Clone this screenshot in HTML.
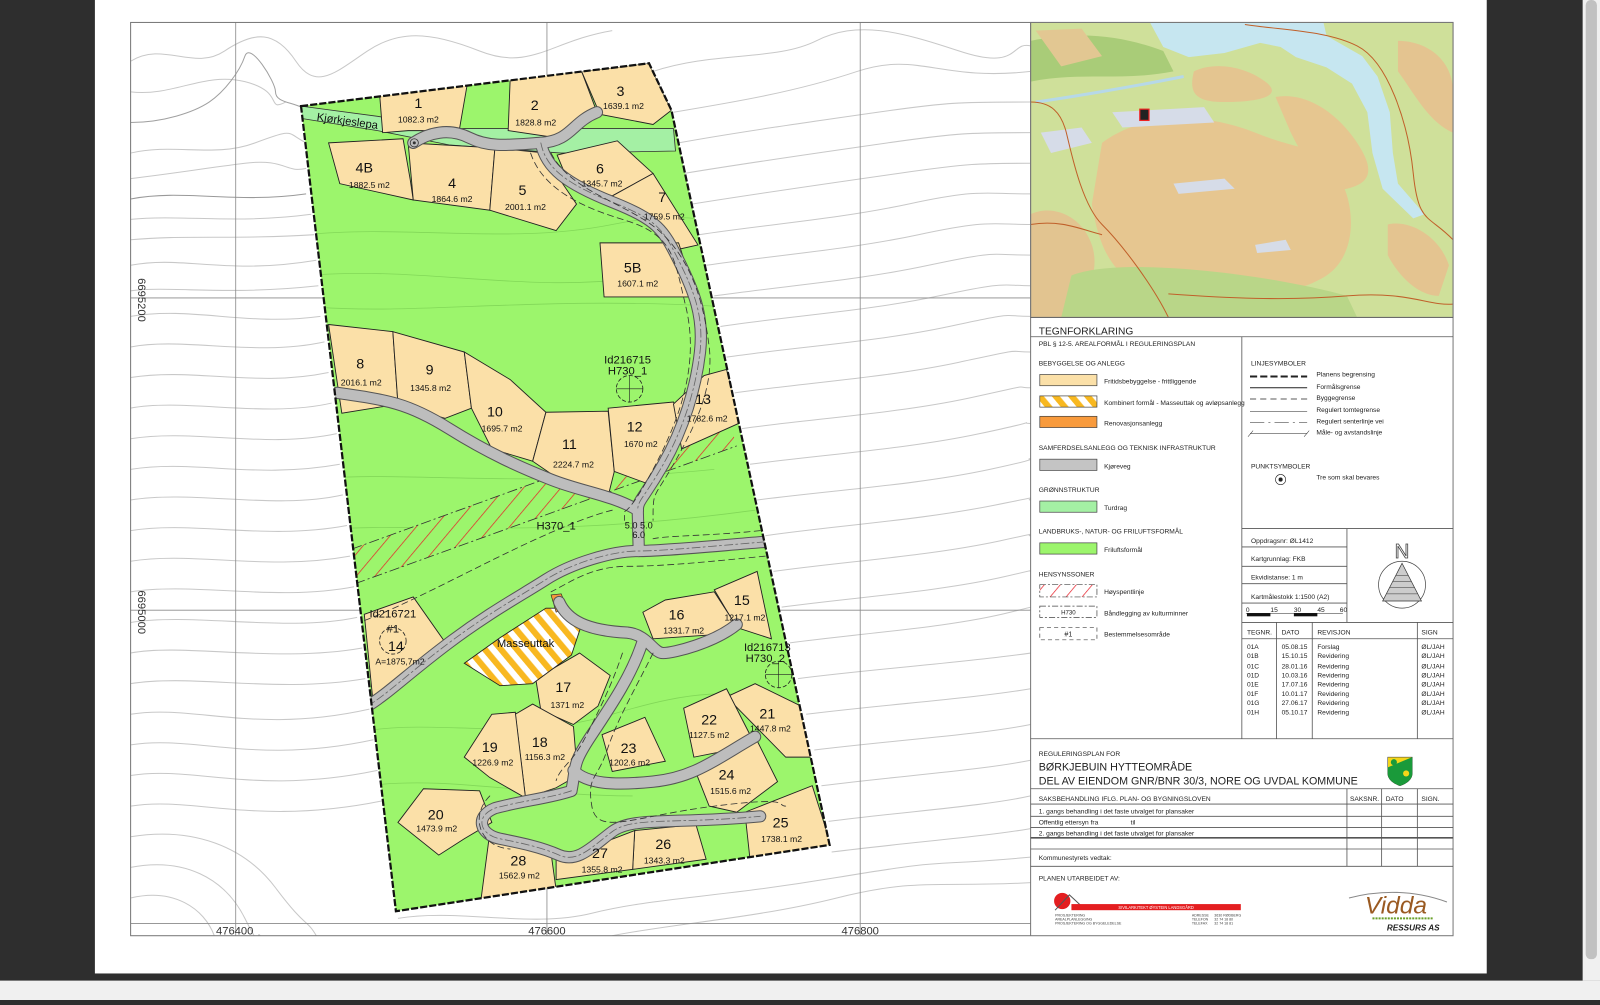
<!DOCTYPE html>
<html><head><meta charset="utf-8">
<style>
html,body{margin:0;padding:0;width:1600px;height:1000px;overflow:hidden;background:#2e2e2e;}
#w{position:absolute;left:0;top:0;width:1568px;height:980px;transform:scale(1.020408);transform-origin:0 0;}
svg text{font-family:"Liberation Sans",sans-serif;}
</style></head><body>
<div id="w">
<svg width="1568" height="980" viewBox="0 0 1568 980" xmlns="http://www.w3.org/2000/svg">
<defs>
<pattern id="red" width="14" height="14" patternUnits="userSpaceOnUse" patternTransform="rotate(40)">
<rect width="14" height="14" fill="#9cf56c"/><line x1="0" y1="0" x2="0" y2="14" stroke="#e8202a" stroke-width="1.4"/></pattern>
<pattern id="ylw" width="12" height="12" patternUnits="userSpaceOnUse" patternTransform="rotate(-40)">
<rect width="12" height="12" fill="#fff"/><rect width="6" height="12" fill="#f8b820"/></pattern>
<pattern id="ylw2" width="12" height="12" patternUnits="userSpaceOnUse" patternTransform="rotate(-40)">
<rect width="12" height="12" fill="#fff"/><rect width="6" height="12" fill="#f8b820"/></pattern>
<pattern id="redl" width="12" height="12" patternUnits="userSpaceOnUse" patternTransform="rotate(40)">
<rect width="12" height="12" fill="#fff"/><line x1="0" y1="0" x2="0" y2="12" stroke="#e8202a" stroke-width="1.4"/></pattern>
<clipPath id="mapclip"><rect x="128" y="22" width="882" height="895"/></clipPath>
<clipPath id="plan"><polygon points="295,104 636,62 658,108 813,828 388,893"/></clipPath>
<clipPath id="topo"><rect x="1010" y="22" width="414" height="289"/></clipPath>
</defs>
<!-- page -->
<rect x="93" y="0" width="1364" height="954" fill="#fff"/>
<rect x="0" y="961" width="1568" height="19" fill="#f0f0f0"/>
<rect x="1551" y="0" width="17" height="961" fill="#f0f0f0"/>
<rect x="1554" y="0" width="11" height="940" rx="5" fill="#c1c1c1"/>

<!-- map area -->
<g clip-path="url(#mapclip)" fill="none" stroke="#c8c8c8" stroke-width="1">
<path d="M128,60 C160,40 190,70 220,50 S270,30 290,60 S330,70 360,50 S420,30 470,50 S540,40 600,30"/>
<path d="M128,90 C170,95 200,70 240,80 S260,110 280,100"/>
<path d="M128,120 C160,120 190,110 205,100 S235,70 240,55 S270,80 270,90 S285,100 295,105" stroke="#a0a0a0"/>
<path d="M128,150 C170,140 210,155 250,140 S280,130 300,140"/>
<path d="M128,175 C170,170 200,165 240,160 S280,170 300,165"/>
<path d="M128,195 C180,185 230,200 300,190" stroke="#999"/>
<path d="M128,215 C180,210 230,220 305,210"/>
<path d="M128,235 C180,230 230,235 308,230"/>
<path d="M128,260 C180,250 220,270 310,255"/>
<path d="M128,285 C170,280 220,290 312,280"/>
<path d="M128,310 C190,300 240,320 314,310"/>
<path d="M128,340 C180,330 250,350 318,335"/>
<path d="M128,370 C190,360 250,380 322,365"/>
<path d="M128,400 C180,390 260,410 325,395"/>
<path d="M128,430 C190,420 260,440 330,425"/>
<path d="M128,460 C190,450 250,470 333,455"/>
<path d="M128,490 C190,480 270,500 336,485"/>
<path d="M128,520 C190,510 260,530 340,515"/>
<path d="M128,550 C190,540 260,560 343,545"/>
<path d="M128,580 C190,570 270,590 347,575"/>
<path d="M128,610 C190,600 280,620 350,605"/>
<path d="M128,640 C180,630 270,650 355,635"/>
<path d="M128,670 C190,660 270,680 358,665"/>
<path d="M128,700 C190,690 250,720 362,695"/>
<path d="M128,730 C190,720 250,750 366,725"/>
<path d="M128,760 C190,750 250,780 370,755"/>
<path d="M128,790 C190,780 250,810 374,785"/>
<path d="M128,820 C190,810 240,830 270,870 S300,900 310,917"/>
<path d="M128,850 C180,840 220,860 240,900 S250,910 255,917"/>
<path d="M128,880 C170,870 200,890 210,917"/>
<path d="M390,900 C450,890 520,910 580,895 S700,880 820,860 S900,850 1010,840"/>
<path d="M600,917 C660,905 740,900 820,880 S920,870 1010,865"/>
<path d="M640,70 C700,50 760,60 800,40 S880,30 940,50 S990,40 1010,45"/>
<path d="M660,110 C720,100 780,90 840,70 S920,80 1010,70"/>
<path d="M665,140 C720,130 790,120 860,110 S940,100 1010,100"/>
<path d="M670,170 C730,160 800,150 870,140 S950,130 1010,130"/>
<path d="M678,200 C740,190 810,180 880,170 S960,160 1010,160"/>
<path d="M685,230 C750,220 820,215 890,200 S960,190 1010,190"/>
<path d="M692,260 C760,250 830,245 900,230 S970,220 1010,220"/>
<path d="M700,290 C770,280 840,275 910,260 S970,250 1010,250"/>
<path d="M706,320 C770,310 850,305 920,290 S980,280 1010,280"/>
<path d="M712,350 C780,340 860,335 930,320 S980,310 1010,310"/>
<path d="M720,385 C790,375 870,370 940,355 S985,345 1010,345"/>
<path d="M727,420 C800,410 880,405 950,390 S990,380 1010,380"/>
<path d="M735,455 C810,445 890,440 960,425 S995,415 1010,415"/>
<path d="M742,490 C820,480 900,475 970,460 S1000,450 1010,450"/>
<path d="M750,525 C820,515 900,510 975,495 S1000,490 1010,490"/>
<path d="M758,560 C830,550 910,545 980,530 S1000,525 1010,525"/>
<path d="M766,595 C840,585 920,580 985,565 S1005,560 1010,560"/>
<path d="M774,630 C850,620 930,615 990,600 S1005,598 1010,598"/>
<path d="M782,665 C860,655 940,650 1010,640"/>
<path d="M790,700 C870,690 950,685 1010,675"/>
<path d="M798,735 C880,725 960,720 1010,710"/>
<path d="M805,770 C885,760 960,755 1010,745"/>
<path d="M812,805 C890,795 965,790 1010,780"/>
<path d="M815,835 C895,825 965,820 1010,812"/>
</g>
<!-- grid -->
<g stroke="#8a8a8a" stroke-width="0.8">
<line x1="231" y1="22" x2="231" y2="917"/><line x1="536" y1="22" x2="536" y2="917"/><line x1="843" y1="22" x2="843" y2="917"/>
<line x1="128" y1="292" x2="1010" y2="292"/><line x1="128" y1="598" x2="1010" y2="598"/>
<line x1="128" y1="905" x2="1010" y2="905"/>
</g>

<!-- plan -->
<polygon points="295,104 636,62 658,108 813,828 388,893" fill="#9cf56c"/>
<g clip-path="url(#plan)">
<g fill="none" stroke="#82d858" stroke-width="0.8">
<path d="M300,230 C400,220 500,240 600,220 S700,230 760,220"/>
<path d="M300,270 C420,260 520,290 640,270"/>
<path d="M300,300 C400,310 520,290 700,300"/>
<path d="M300,470 C400,460 500,480 700,460"/>
<path d="M300,520 C420,510 520,530 740,500"/>
<path d="M340,720 C420,700 500,730 600,700 S720,680 800,690"/>
<path d="M360,770 C440,760 520,780 620,780"/>
</g>
<!-- turdrag -->
<polygon points="295,104 370,114 440,126 660,126 662,148 550,150 440,142 370,128 295,116" fill="#a4f0a4" stroke="#333" stroke-width="0.8"/>
<!-- hoyspent -->
<polygon points="345,538 712,405 722,437 348,572" fill="url(#red)"/>
<path d="M345,538 L712,405 M348,572 L722,437" stroke="#333" stroke-width="0.8" stroke-dasharray="10,3,2,3" fill="none"/>
<!-- lots -->
<g fill="#fbe0a8" stroke="#222" stroke-width="0.9">
<polygon points="372,92 458,82 450,128 400,128 375,130"/>
<polygon points="500,77 570,70 585,110 545,135 498,128"/>
<polygon points="570,70 636,62 658,108 640,122 588,112"/>
<polygon points="322,140 395,136 402,176 405,196 333,180"/>
<polygon points="400,140 485,145 480,206 405,196"/>
<polygon points="485,145 535,150 548,175 565,200 545,226 480,206"/>
<polygon points="546,152 605,138 640,170 600,192 556,176"/>
<polygon points="600,192 640,170 684,240 662,245 636,216"/>
<polygon points="588,238 665,238 682,291 592,291"/>
<polygon points="322,318 385,325 390,396 335,405"/>
<polygon points="385,325 455,345 462,400 436,410 390,396"/>
<polygon points="455,345 500,372 535,404 522,452 482,440 462,400"/>
<polygon points="535,404 596,403 602,462 597,482 560,478 522,452"/>
<polygon points="596,400 660,394 672,420 656,450 640,476 602,462"/>
<polygon points="660,396 690,368 712,362 726,414 668,440"/>
<polygon points="357,602 405,585 438,632 415,650 366,692"/>
<polygon points="700,578 742,560 756,626 722,615"/>
<polygon points="630,600 652,588 700,580 722,614 700,622 640,626"/>
<polygon points="525,665 568,640 598,662 586,692 562,710 530,696"/>
<polygon points="505,700 522,690 562,712 566,760 545,772 515,782"/>
<polygon points="455,742 482,700 505,698 515,782 480,762"/>
<polygon points="390,806 415,773 470,775 482,806 455,822 430,838"/>
<polygon points="712,683 740,670 785,692 798,742 770,742"/>
<polygon points="670,694 712,675 736,722 710,736 680,742"/>
<polygon points="590,720 632,703 652,746 600,756"/>
<polygon points="680,752 740,722 762,766 722,796 695,790"/>
<polygon points="730,796 796,770 815,830 735,842"/>
<polygon points="622,814 682,808 692,842 620,852"/>
<polygon points="545,842 575,832 622,814 620,852 545,862"/>
<polygon points="480,816 540,836 545,872 470,892"/>
</g>
<!-- masseuttak -->
<polygon points="455,650 490,625 535,596 550,596 570,612 560,642 522,670 490,672" fill="url(#ylw)" stroke="#222" stroke-width="0.9"/>
<polygon points="540,583 550,582 555,595 545,600" fill="#f8963c" stroke="#222" stroke-width="0.6"/>
<!-- roads -->
<g fill="none" stroke-linecap="round" stroke-linejoin="round">
<g stroke="#555" stroke-width="12">
<path d="M405,140 C420,130 440,125 460,135 S500,142 530,140 S560,120 585,110"/>
<path d="M530,140 C535,165 555,180 600,198 S650,225 665,255 S690,310 686,345 S670,420 650,455 S625,490 625,500"/>
<path d="M625,500 C600,485 570,482 540,470 S480,445 440,420 S380,392 330,385"/>
<path d="M625,500 L626,540"/>
<path d="M750,531 C700,535 650,540 625,540 S560,552 535,568 S480,600 440,630 S380,680 360,692"/>
<path d="M548,590 C556,608 575,618 615,620 C635,622 640,640 650,640 S700,630 722,612"/>
<path d="M630,628 C620,660 600,690 580,720 S565,750 560,775"/>
<path d="M560,775 C540,782 510,785 485,792 C465,800 470,818 490,822 S530,830 548,838 S580,830 600,815 S660,808 745,800"/>
<path d="M562,755 C575,768 600,770 640,766 S700,745 740,722"/>
</g>
<g stroke="#bdbdbd" stroke-width="10">
<path d="M405,140 C420,130 440,125 460,135 S500,142 530,140 S560,120 585,110"/>
<path d="M530,140 C535,165 555,180 600,198 S650,225 665,255 S690,310 686,345 S670,420 650,455 S625,490 625,500"/>
<path d="M625,500 C600,485 570,482 540,470 S480,445 440,420 S380,392 330,385"/>
<path d="M625,500 L626,540"/>
<path d="M750,531 C700,535 650,540 625,540 S560,552 535,568 S480,600 440,630 S380,680 360,692"/>
<path d="M548,590 C556,608 575,618 615,620 C635,622 640,640 650,640 S700,630 722,612"/>
<path d="M630,628 C620,660 600,690 580,720 S565,750 560,775"/>
<path d="M560,775 C540,782 510,785 485,792 C465,800 470,818 490,822 S530,830 548,838 S580,830 600,815 S660,808 745,800"/>
<path d="M562,755 C575,768 600,770 640,766 S700,745 740,722"/>
</g>
<g stroke="#666" stroke-width="0.8" stroke-dasharray="8,3,2,3">
<path d="M530,140 C535,165 555,180 600,198 S650,225 665,255 S690,310 686,345 S670,420 650,455 S625,490 625,500"/>
<path d="M750,531 C700,535 650,540 625,540 S560,552 535,568 S480,600 440,630 S380,680 360,692"/>
<path d="M560,775 C540,782 510,785 485,792 C465,800 470,818 490,822 S530,830 548,838 S580,830 600,815 S660,808 745,800"/>
</g>
<g stroke="#333" stroke-width="0.8" stroke-dasharray="6,4">
<path d="M540,150 C560,190 620,200 650,230 S690,300 695,340 S680,420 660,455 S640,480 640,510"/>
<path d="M520,150 C530,180 560,200 610,215 S660,250 672,300 S672,400 640,460 S612,490 612,510"/>
<path d="M750,545 C700,550 650,555 615,555 S560,570 540,580"/>
<path d="M600,500 C560,510 500,540 460,560 S380,600 352,610"/>
<path d="M745,520 C700,525 650,525 640,528"/>
<path d="M640,640 C620,680 605,705 595,735 S575,760 580,790 S620,800 700,790 S760,790 770,790"/>
<path d="M610,640 C600,670 590,690 575,720 S550,750 545,765"/>
<path d="M480,780 C460,800 470,830 500,832"/>
</g>
</g>
<!-- tree symbol -->
<circle cx="406" cy="140" r="4" fill="none" stroke="#333" stroke-width="0.8"/><circle cx="406" cy="140" r="1.5" fill="#333"/>
<!-- hensyn circles -->
<circle cx="617" cy="381" r="13" fill="none" stroke="#222" stroke-width="0.8" stroke-dasharray="4,2"/>
<line x1="604" y1="381" x2="630" y2="381" stroke="#222" stroke-width="0.6"/><line x1="617" y1="368" x2="617" y2="394" stroke="#222" stroke-width="0.6"/>
<circle cx="763" cy="661" r="13" fill="none" stroke="#222" stroke-width="0.8" stroke-dasharray="4,2"/>
<line x1="750" y1="661" x2="776" y2="661" stroke="#222" stroke-width="0.6"/><line x1="763" y1="648" x2="763" y2="674" stroke="#222" stroke-width="0.6"/>
<circle cx="385" cy="628" r="13" fill="none" stroke="#222" stroke-width="0.8" stroke-dasharray="4,2"/>
</g>
<polygon points="295,104 636,62 658,108 813,828 388,893" fill="none" stroke="#111" stroke-width="2.2" stroke-dasharray="7,2"/>

<!-- labels -->
<g font-size="14" fill="#111" text-anchor="middle">
<text x="410" y="106">1</text><text x="524" y="108">2</text><text x="608" y="94">3</text>
<text x="357" y="169">4B</text><text x="443" y="184">4</text><text x="512" y="191">5</text>
<text x="588" y="170">6</text><text x="649" y="198">7</text><text x="620" y="267">5B</text>
<text x="353" y="361">8</text><text x="421" y="367">9</text><text x="485" y="408">10</text>
<text x="558" y="440">11</text><text x="622" y="423">12</text><text x="689" y="396">13</text>
<text x="388" y="638">14</text><text x="727" y="593">15</text><text x="663" y="607">16</text>
<text x="552" y="678">17</text><text x="529" y="732">18</text><text x="480" y="737">19</text>
<text x="427" y="803">20</text><text x="752" y="704">21</text><text x="695" y="710">22</text>
<text x="616" y="738">23</text><text x="712" y="764">24</text><text x="765" y="811">25</text>
<text x="650" y="832">26</text><text x="588" y="841">27</text><text x="508" y="848">28</text>
</g>
<g font-size="8.5" fill="#111" text-anchor="middle">
<text x="410" y="120">1082.3 m2</text><text x="525" y="123">1828.8 m2</text><text x="611" y="107">1639.1 m2</text>
<text x="362" y="184">1882.5 m2</text><text x="443" y="198">1864.6 m2</text><text x="515" y="206">2001.1 m2</text>
<text x="590" y="183">1345.7 m2</text><text x="651" y="215">1759.5 m2</text><text x="625" y="281">1607.1 m2</text>
<text x="354" y="378">2016.1 m2</text><text x="422" y="383">1345.8 m2</text><text x="492" y="423">1695.7 m2</text>
<text x="562" y="458">2224.7 m2</text><text x="628" y="438">1670 m2</text><text x="693" y="413">1782.6 m2</text>
<text x="392" y="651">A=1875,7m2</text><text x="730" y="608">1217.1 m2</text><text x="670" y="621">1331.7 m2</text>
<text x="556" y="694">1371 m2</text><text x="534" y="745">1156.3 m2</text><text x="483" y="750">1226.9 m2</text>
<text x="428" y="815">1473.9 m2</text><text x="755" y="717">1447.8 m2</text><text x="695" y="723">1127.5 m2</text>
<text x="617" y="750">1202.6 m2</text><text x="716" y="778">1515.6 m2</text><text x="766" y="825">1738.1 m2</text>
<text x="651" y="846">1343.3 m2</text><text x="590" y="855">1355.8 m2</text><text x="509" y="861">1562.9 m2</text>
</g>
<g font-size="11" fill="#111" text-anchor="middle">
<text x="615" y="356">Id216715</text><text x="615" y="367">H730_1</text>
<text x="752" y="638">Id216713</text><text x="750" y="649">H730_2</text>
<text x="385" y="605">Id216721</text><text x="385" y="620">#1</text>
<text x="545" y="519">H370_1</text>
<text x="515" y="634">Masseuttak</text>
<text x="626" y="518" font-size="9">5.0 5.0</text><text x="626" y="527" font-size="9">6.0</text>
</g>
<text x="310" y="118" font-size="11" fill="#111" transform="rotate(8 310 118)">Kjørkjeslepa</text>
<!-- coordinate labels -->
<g font-size="11" fill="#333" text-anchor="middle">
<text x="230" y="916">476400</text><text x="536" y="916">476600</text><text x="843" y="916">476800</text>
<text transform="translate(135,294) rotate(90)">6695200</text>
<text transform="translate(135,600) rotate(90)">6695000</text>
</g>

<!-- topo map -->
<g clip-path="url(#topo)">
<rect x="1010" y="22" width="414" height="289" fill="#cfe09a"/>
<path d="M1010,40 C1060,30 1100,35 1140,50 L1150,70 C1100,80 1060,70 1010,80 Z" fill="#a9cc78"/>
<path d="M1015,30 L1060,28 L1080,55 L1040,65 Z" fill="#e2c792"/>
<path d="M1080,140 C1120,110 1180,110 1230,130 S1290,140 1310,170 S1330,250 1300,270 S1200,300 1150,290 S1080,260 1070,200 Z" fill="#e6c690"/>
<path d="M1250,95 C1280,90 1310,110 1330,140 S1340,180 1320,185 S1280,160 1265,130 Z" fill="#e6c690"/>
<path d="M1010,210 C1030,200 1060,210 1070,240 S1060,300 1040,311 L1010,311 Z" fill="#e2c490"/>
<path d="M1170,70 C1190,60 1220,65 1240,80 S1230,100 1200,100 S1165,90 1170,70 Z" fill="#e4c590"/>
<path d="M1370,40 C1400,40 1424,60 1424,90 L1424,130 C1400,120 1385,90 1370,70 Z" fill="#e4c490"/>
<path d="M1360,220 C1380,215 1410,230 1420,260 L1410,290 C1390,290 1370,270 1360,250 Z" fill="#e4c490"/>
<path d="M1050,270 C1100,250 1250,270 1320,290 L1330,311 L1040,311 Z" fill="#b9d688"/>
<path d="M1090,110 L1180,105 L1190,120 L1100,125 Z" fill="#d6dce8"/>
<path d="M1150,180 L1200,175 L1210,185 L1155,190 Z" fill="#d6dce8"/>
<path d="M1230,240 L1260,235 L1265,245 L1232,248 Z" fill="#d6dce8"/>
<path d="M1020,130 L1060,125 L1070,140 L1030,150 Z" fill="#d6dce8"/>
<path d="M1127,22 L1297,22 L1300,35 L1335,55 L1350,75 L1362,110 L1365,150 L1370,180 L1396,210 L1385,214 L1355,185 L1345,150 L1340,110 L1325,82 L1300,66 L1270,56 L1255,46 L1235,42 L1200,52 L1165,56 L1140,46 Z" fill="#c6e6f0"/>
<path d="M1015,100 C1050,95 1110,85 1160,75" stroke="#b6d8e8" stroke-width="3" fill="none"/>
<g fill="none" stroke="#c0602a" stroke-width="1">
<path d="M1010,100 C1030,100 1040,110 1045,130 S1060,200 1080,220 S1130,280 1145,311"/>
<path d="M1145,288 C1200,292 1260,295 1320,290 S1400,300 1424,298"/>
<path d="M1220,24 C1260,30 1300,30 1330,45 S1380,120 1385,170 S1400,210 1424,235"/>
<path d="M1010,220 C1040,215 1060,225 1080,230"/>
</g>
<rect x="1117" y="107" width="9" height="11" fill="#222" stroke="#e22" stroke-width="1.2"/>
</g>
<rect x="1010" y="22" width="414" height="289" fill="none" stroke="#888" stroke-width="1"/>

<!-- frame -->
<rect x="128" y="22" width="1296" height="895" fill="none" stroke="#777" stroke-width="1"/>
<line x1="1010" y1="22" x2="1010" y2="917" stroke="#777" stroke-width="1"/>

<!-- legend -->
<g stroke="#555" stroke-width="0.8" fill="none">
<line x1="1010" y1="311" x2="1424" y2="311"/>
<line x1="1010" y1="330" x2="1424" y2="330"/>
<line x1="1217" y1="330" x2="1217" y2="724"/>
<line x1="1217" y1="518" x2="1424" y2="518"/>
<line x1="1320" y1="518" x2="1320" y2="610"/>
<line x1="1217" y1="536" x2="1320" y2="536"/><line x1="1217" y1="555" x2="1320" y2="555"/>
<line x1="1217" y1="572" x2="1320" y2="572"/><line x1="1217" y1="591" x2="1320" y2="591"/>
<line x1="1217" y1="610" x2="1424" y2="610"/><line x1="1217" y1="626" x2="1424" y2="626"/>
<line x1="1251" y1="610" x2="1251" y2="724"/><line x1="1286" y1="610" x2="1286" y2="724"/><line x1="1389" y1="610" x2="1389" y2="724"/>
<line x1="1010" y1="724" x2="1424" y2="724"/>
<line x1="1010" y1="773" x2="1424" y2="773"/>
<line x1="1010" y1="788" x2="1424" y2="788"/><line x1="1010" y1="800" x2="1424" y2="800"/>
<line x1="1010" y1="811" x2="1424" y2="811"/>
<line x1="1010" y1="821" x2="1424" y2="821" stroke-width="1.6"/>
<line x1="1010" y1="832" x2="1424" y2="832"/><line x1="1010" y1="849" x2="1424" y2="849"/>
<line x1="1320" y1="773" x2="1320" y2="849"/><line x1="1354" y1="773" x2="1354" y2="849"/><line x1="1389" y1="773" x2="1389" y2="849"/>
</g>
<g font-size="6.5" fill="#222">
<text x="1018" y="328" font-size="10">TEGNFORKLARING</text>
<text x="1018" y="339">PBL § 12-5. AREALFORMÅL I REGULERINGSPLAN</text>
<text x="1018" y="358">BEBYGGELSE OG ANLEGG</text>
<text x="1082" y="376">Fritidsbebyggelse - frittliggende</text>
<text x="1082" y="397">Kombinert formål - Masseuttak og avløpsanlegg</text>
<text x="1082" y="417">Renovasjonsanlegg</text>
<text x="1018" y="441">SAMFERDSELSANLEGG OG TEKNISK INFRASTRUKTUR</text>
<text x="1082" y="459">Kjøreveg</text>
<text x="1018" y="482">GRØNNSTRUKTUR</text>
<text x="1082" y="500">Turdrag</text>
<text x="1018" y="523">LANDBRUKS-, NATUR- OG FRILUFTSFORMÅL</text>
<text x="1082" y="541">Friluftsformål</text>
<text x="1018" y="565">HENSYNSSONER</text>
<text x="1082" y="582">Høyspentlinje</text>
<text x="1082" y="603">Båndlegging av kulturminner</text>
<text x="1082" y="624">Bestemmelsesområde</text>
<text x="1226" y="358">LINJESYMBOLER</text>
<text x="1290" y="369">Planens begrensing</text>
<text x="1290" y="381">Formålsgrense</text>
<text x="1290" y="392">Byggegrense</text>
<text x="1290" y="404">Regulert tomtegrense</text>
<text x="1290" y="415">Regulert senterlinje vei</text>
<text x="1290" y="426">Måle- og avstandslinje</text>
<text x="1226" y="459">PUNKTSYMBOLER</text>
<text x="1290" y="470">Tre som skal bevares</text>
<text x="1226" y="532">Oppdragsnr: ØL1412</text>
<text x="1226" y="550">Kartgrunnlag: FKB</text>
<text x="1226" y="568">Ekvidistanse: 1 m</text>
<text x="1226" y="587">Kartmålestokk 1:1500 (A2)</text>
<text x="1221" y="600">0</text><text x="1245" y="600">15</text><text x="1268" y="600">30</text><text x="1291" y="600">45</text><text x="1313" y="600">60</text>
<text x="1222" y="622">TEGNR.</text><text x="1256" y="622">DATO</text><text x="1291" y="622">REVISJON</text><text x="1393" y="622">SIGN</text>
</g>
<g font-size="6.5" fill="#222">
<text x="1222" y="636">01A</text><text x="1256" y="636">05.08.15</text><text x="1291" y="636">Forslag</text><text x="1393" y="636">ØL/JAH</text>
<text x="1222" y="645">01B</text><text x="1256" y="645">15.10.15</text><text x="1291" y="645">Revidering</text><text x="1393" y="645">ØL/JAH</text>
<text x="1222" y="655">01C</text><text x="1256" y="655">28.01.16</text><text x="1291" y="655">Revidering</text><text x="1393" y="655">ØL/JAH</text>
<text x="1222" y="664">01D</text><text x="1256" y="664">10.03.16</text><text x="1291" y="664">Revidering</text><text x="1393" y="664">ØL/JAH</text>
<text x="1222" y="673">01E</text><text x="1256" y="673">17.07.16</text><text x="1291" y="673">Revidering</text><text x="1393" y="673">ØL/JAH</text>
<text x="1222" y="682">01F</text><text x="1256" y="682">10.01.17</text><text x="1291" y="682">Revidering</text><text x="1393" y="682">ØL/JAH</text>
<text x="1222" y="691">01G</text><text x="1256" y="691">27.06.17</text><text x="1291" y="691">Revidering</text><text x="1393" y="691">ØL/JAH</text>
<text x="1222" y="700">01H</text><text x="1256" y="700">05.10.17</text><text x="1291" y="700">Revidering</text><text x="1393" y="700">ØL/JAH</text>
<text x="1018" y="741">REGULERINGSPLAN FOR</text>
<text x="1018" y="755" font-size="10.5">BØRKJEBUIN HYTTEOMRÅDE</text>
<text x="1018" y="769" font-size="10.5">DEL AV EIENDOM GNR/BNR 30/3, NORE OG UVDAL KOMMUNE</text>
<text x="1018" y="785">SAKSBEHANDLING IFLG. PLAN- OG BYGNINGSLOVEN</text>
<text x="1323" y="785">SAKSNR.</text><text x="1358" y="785">DATO</text><text x="1393" y="785">SIGN.</text>
<text x="1018" y="797">1. gangs behandling i det faste utvalget for plansaker</text>
<text x="1018" y="808">Offentlig ettersyn fra</text><text x="1108" y="808">til</text>
<text x="1018" y="819">2. gangs behandling i det faste utvalget for plansaker</text>
<text x="1018" y="843">Kommunestyrets vedtak:</text>
<text x="1018" y="863">PLANEN UTARBEIDET AV:</text>
</g>
<!-- swatches -->
<g stroke="#444" stroke-width="0.7">
<rect x="1019" y="367" width="56" height="11" fill="#fbe0a8"/>
<rect x="1019" y="388" width="56" height="11" fill="url(#ylw2)"/>
<rect x="1019" y="408" width="56" height="11" fill="#f89a3c"/>
<rect x="1019" y="450" width="56" height="11" fill="#c4c4c4"/>
<rect x="1019" y="491" width="56" height="11" fill="#a4f0a4"/>
<rect x="1019" y="532" width="56" height="11" fill="#9cf56c"/>
<rect x="1019" y="573" width="56" height="12" fill="url(#redl)" stroke-dasharray="6,2,2,2"/>
<rect x="1019" y="594" width="56" height="11" fill="none" stroke-dasharray="6,2,2,2"/>
<rect x="1019" y="615" width="56" height="12" fill="none" stroke-dasharray="4,3"/>
</g>
<text x="1047" y="602" font-size="6" fill="#222" text-anchor="middle">H730</text>
<text x="1047" y="624" font-size="7" fill="#222" text-anchor="middle">#1</text>
<g stroke="#222" fill="none">
<line x1="1225" y1="369" x2="1281" y2="369" stroke-width="2" stroke-dasharray="7,3"/>
<line x1="1225" y1="380" x2="1281" y2="380" stroke-width="1"/>
<line x1="1225" y1="391" x2="1281" y2="391" stroke-width="0.8" stroke-dasharray="6,4"/>
<line x1="1225" y1="403" x2="1281" y2="403" stroke-width="0.5"/>
<line x1="1225" y1="414" x2="1281" y2="414" stroke-width="0.5" stroke-dasharray="14,4,2,4"/>
<line x1="1225" y1="425" x2="1281" y2="425" stroke-width="0.5"/>
<line x1="1223" y1="428" x2="1228" y2="422" stroke-width="0.5"/><line x1="1278" y1="428" x2="1283" y2="422" stroke-width="0.5"/>
<circle cx="1255" cy="470" r="5" stroke-width="0.6"/><circle cx="1255" cy="470" r="1.5" fill="#222"/>
<line x1="1221" y1="601" x2="1316" y2="601" stroke-width="0.5"/>
</g>
<rect x="1222" y="601" width="23" height="3" fill="#111"/><rect x="1268" y="601" width="23" height="3" fill="#111"/>
<!-- compass -->
<text x="1374" y="547" font-size="20" font-family="Liberation Serif,serif" fill="#fff" stroke="#444" stroke-width="0.8" text-anchor="middle">N</text>
<circle cx="1374" cy="573" r="23" fill="none" stroke="#444" stroke-width="0.7"/>
<polygon points="1374,552 1355,589 1393,589" fill="#ccc" stroke="#333" stroke-width="0.7"/>
<g stroke="#333" stroke-width="0.5">
<line x1="1368" y1="564" x2="1380" y2="564"/><line x1="1365" y1="570" x2="1383" y2="570"/><line x1="1362" y1="576" x2="1386" y2="576"/><line x1="1359" y1="582" x2="1389" y2="582"/>
</g>
<!-- crest -->
<path d="M1360,742 L1384,742 L1384,758 C1384,764 1378,768 1372,770 C1366,768 1360,764 1360,758 Z" fill="#f5d619" stroke="#333" stroke-width="0.5"/>
<path d="M1360,752 L1384,742 L1384,758 C1384,764 1378,768 1372,770 C1366,768 1360,764 1360,758 Z" fill="#1a9a3a"/>
<circle cx="1366" cy="747" r="3" fill="#1a9a3a"/><circle cx="1378" cy="758" r="3" fill="#f5d619"/>
<!-- firm logo -->
<circle cx="1041" cy="883" r="8" fill="#e41e20"/>
<path d="M1034,892 L1048,877 L1062,890" stroke="#555" stroke-width="1" fill="none"/>
<rect x="1050" y="886" width="166" height="6" fill="#e41e20"/>
<text x="1133" y="891" font-size="4" fill="#fff" text-anchor="middle">SIVILARKITEKT ØYSTEIN LANDSGÅRD</text>
<g font-size="3.5" fill="#444"><text x="1034" y="898">PROSJEKTERING</text><text x="1034" y="902">AREALPLANLEGGING</text><text x="1034" y="906">PROSJEKTERING OG BYGGELEDELSE</text>
<text x="1168" y="898">ADRESSE</text><text x="1168" y="902">TELEFON</text><text x="1168" y="906">TELEFAX</text>
<text x="1190" y="898">3630 RØDBERG</text><text x="1190" y="902">32 74 18 80</text><text x="1190" y="906">32 74 18 81</text></g>
<!-- vidda logo -->
<path d="M1322,880 C1345,874 1380,870 1418,884" stroke="#888" stroke-width="1" fill="none"/>
<text x="1368" y="895" font-size="24" font-style="italic" font-family="Liberation Serif,serif" fill="#9a5a22" text-anchor="middle">Vidda</text>
<path d="M1345,900 L1405,900" stroke="#6aa02a" stroke-width="2" stroke-dasharray="2,1"/>
<text x="1385" y="912" font-size="8" font-weight="bold" font-style="italic" fill="#222" text-anchor="middle">RESSURS AS</text>
</svg>
</div>
</body></html>
